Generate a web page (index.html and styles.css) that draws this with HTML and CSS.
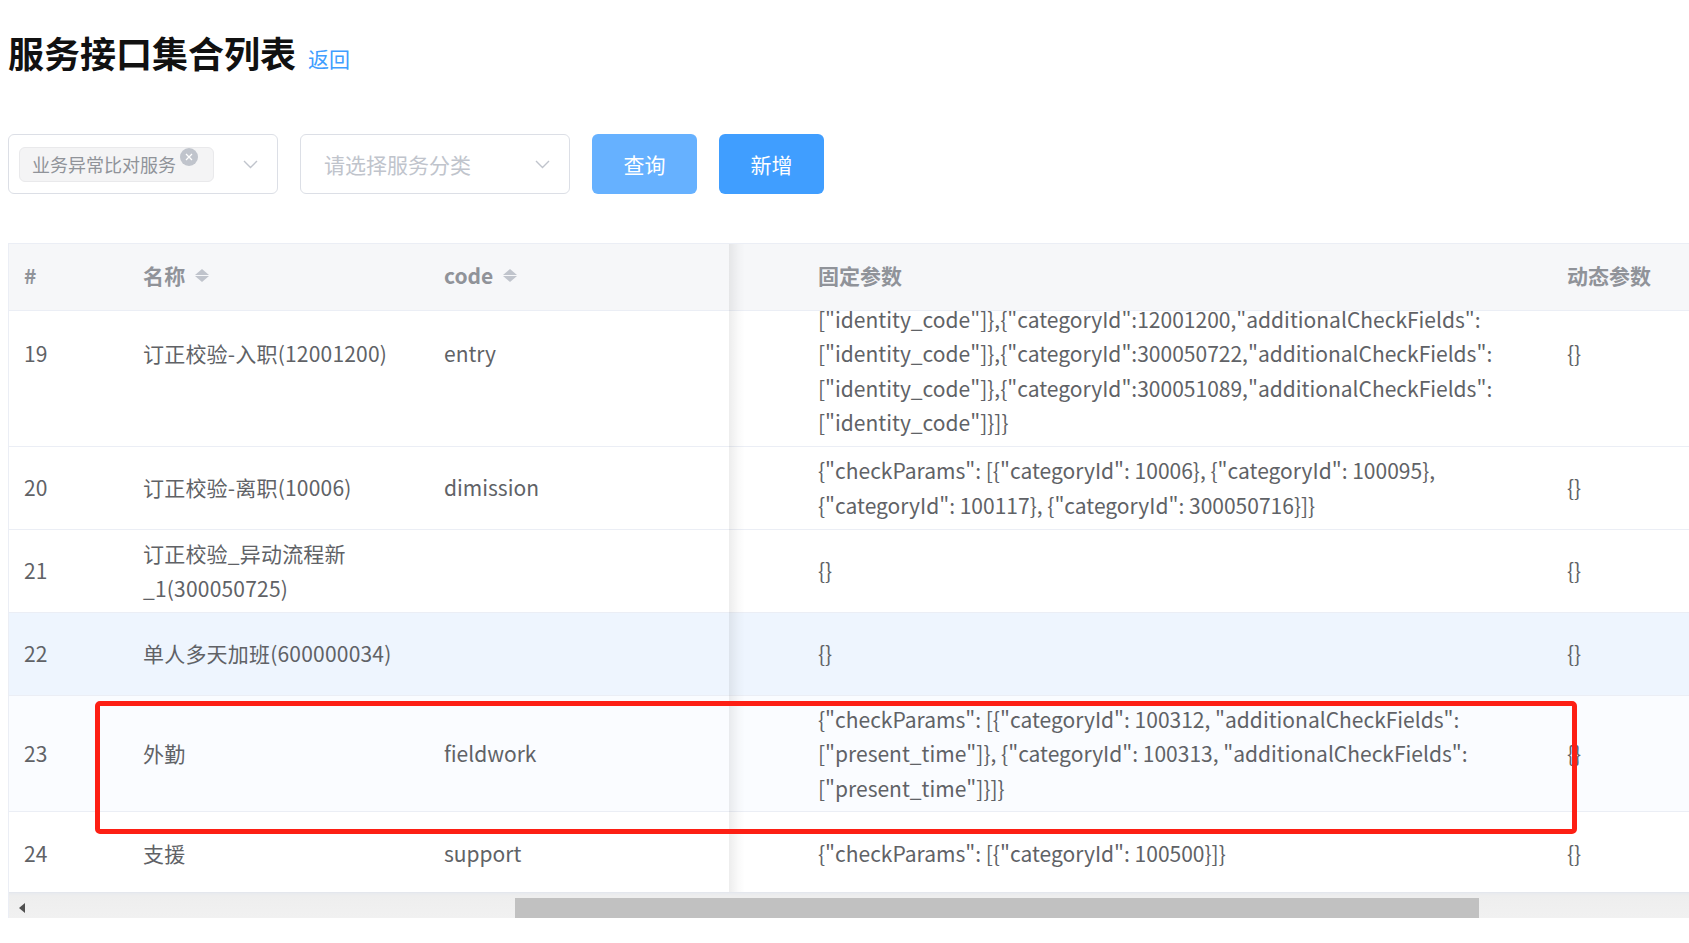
FILE: index.html
```html
<!DOCTYPE html>
<html lang="zh-CN">
<head>
<meta charset="utf-8">
<title>服务接口集合列表</title>
<link rel="stylesheet" href="styles.css">
</head>
<body>
<div class="page">
  <div class="title-bar">
    <h2 class="title">服务接口集合列表</h2>
    <a class="back">返回</a>
  </div>

  <div class="filters">
    <div class="select">
      <span class="tag">业务异常比对服务<span class="tag-close"><svg width="10" height="10" viewBox="0 0 10 10"><path d="M2 2 L8 8 M8 2 L2 8" stroke="#fff" stroke-width="1.3" fill="none"/></svg></span></span>
      <span class="spacer"></span>
      <svg class="chev" width="15" height="9" viewBox="0 0 15 9"><path d="M1 1 L7.5 7.5 L14 1" stroke="#c0c4cc" stroke-width="1.4" fill="none"/></svg>
    </div>
    <div class="select">
      <span class="placeholder">请选择服务分类</span>
      <span class="spacer"></span>
      <svg class="chev" width="15" height="9" viewBox="0 0 15 9"><path d="M1 1 L7.5 7.5 L14 1" stroke="#c0c4cc" stroke-width="1.4" fill="none"/></svg>
    </div>
    <button class="btn btn-light">查询</button>
    <button class="btn btn-primary">新增</button>
  </div>

  <div class="table">
    <div class="row thead">
      <div class="cell c-idx">#</div>
      <div class="cell c-name">名称<span class="caret"><i class="up"></i><i class="down"></i></span></div>
      <div class="cell c-code">code<span class="caret"><i class="up"></i><i class="down"></i></span></div>
      <div class="cell c-fixed">固定参数</div>
      <div class="cell c-dyn">动态参数</div>
    </div>
    <div class="tbody">
      <div class="tbody-inner">
        <div class="row">
          <div class="cell c-idx">19</div>
          <div class="cell c-name">订正校验-入职(12001200)</div>
          <div class="cell c-code">entry</div>
          <div class="cell c-fixed">{"checkParams":[{"categoryId":10001,"additionalCheckFields":<br>["identity_code"]},{"categoryId":12001200,"additionalCheckFields":<br>["identity_code"]},{"categoryId":300050722,"additionalCheckFields":<br>["identity_code"]},{"categoryId":300051089,"additionalCheckFields":<br>["identity_code"]}]}</div>
          <div class="cell c-dyn">{}</div>
        </div>
        <div class="row">
          <div class="cell c-idx">20</div>
          <div class="cell c-name">订正校验-离职(10006)</div>
          <div class="cell c-code">dimission</div>
          <div class="cell c-fixed">{"checkParams": [{"categoryId": 10006}, {"categoryId": 100095},<br>{"categoryId": 100117}, {"categoryId": 300050716}]}</div>
          <div class="cell c-dyn">{}</div>
        </div>
        <div class="row">
          <div class="cell c-idx">21</div>
          <div class="cell c-name">订正校验_异动流程新<br>_1(300050725)</div>
          <div class="cell c-code"></div>
          <div class="cell c-fixed">{}</div>
          <div class="cell c-dyn">{}</div>
        </div>
        <div class="row row-hover">
          <div class="cell c-idx">22</div>
          <div class="cell c-name">单人多天加班(600000034)</div>
          <div class="cell c-code"></div>
          <div class="cell c-fixed">{}</div>
          <div class="cell c-dyn">{}</div>
        </div>
        <div class="row row-striped">
          <div class="cell c-idx">23</div>
          <div class="cell c-name">外勤</div>
          <div class="cell c-code">fieldwork</div>
          <div class="cell c-fixed">{"checkParams": [{"categoryId": 100312, "additionalCheckFields":<br>["present_time"]}, {"categoryId": 100313, "additionalCheckFields":<br>["present_time"]}]}</div>
          <div class="cell c-dyn">{}</div>
        </div>
        <div class="row">
          <div class="cell c-idx">24</div>
          <div class="cell c-name">支援</div>
          <div class="cell c-code">support</div>
          <div class="cell c-fixed">{"checkParams": [{"categoryId": 100500}]}</div>
          <div class="cell c-dyn">{}</div>
        </div>
      </div>
    </div>
    <div class="hscroll">
      <span class="hs-arrow"></span>
      <span class="hs-thumb"></span>
    </div>
    <div class="fixed-shadow"></div>
    <div class="annot"></div>
  </div>
</div>
</body>
</html>
```

FILE: styles.css
```css
html, body {
  margin: 0;
  padding: 0;
  background: #fff;
}
body {
  font-family: "Noto Sans CJK SC", "Microsoft YaHei", sans-serif;
  color: #606266;
  overflow: hidden;
}
.page {
  padding-left: 8px;
}

/* title */
.title-bar {
  margin-top: 25px;
  height: 54px;
  display: flex;
  align-items: baseline;
}
.title {
  margin: 0;
  font-size: 36px;
  line-height: 54px;
  font-weight: 700;
  color: #111;
}
.back {
  margin-left: 12px;
  font-size: 21px;
  color: #409eff;
  cursor: pointer;
  position: relative;
  top: -1px;
}

/* filters */
.filters {
  margin-top: 55px;
  display: flex;
  gap: 22px;
}
.select {
  width: 270px;
  height: 60px;
  box-sizing: border-box;
  border: 1px solid #dcdfe6;
  border-radius: 6px;
  display: flex;
  align-items: center;
  padding: 0 19px 0 10px;
}
.spacer { flex: 1; }
.placeholder {
  padding-left: 13px;
  font-size: 21px;
  color: #c0c4cc;
}
.tag {
  height: 35px;
  box-sizing: border-box;
  display: inline-flex;
  align-items: center;
  padding: 0 15px 0 12px;
  background: #f4f4f5;
  border: 1px solid #e9e9eb;
  border-radius: 6px;
  font-size: 18px;
  color: #909399;
  white-space: nowrap;
}
.tag-close {
  width: 18px;
  height: 18px;
  border-radius: 50%;
  background: #c0c4cc;
  margin-left: 4px;
  display: inline-flex;
  align-items: center;
  justify-content: center;
  position: relative;
  top: -7px;
}
.chev { display: block; }

.btn {
  width: 105px;
  height: 60px;
  border: none;
  border-radius: 6px;
  color: #fff;
  font-family: inherit;
  font-size: 21px;
  padding: 0;
}
.btn-light { background: #66b1ff; }
.btn-primary { background: #409eff; }

/* table */
.table {
  margin-top: 49px;
  position: relative;
  border-top: 1px solid #ebeef5;
  border-left: 1px solid #ebeef5;
  overflow: hidden;
  font-size: 21px;
}
.row {
  display: flex;
  align-items: center;
  min-height: 83px;
  box-sizing: border-box;
  border-bottom: 1px solid #ebeef5;
  background: #fff;
}
.cell {
  box-sizing: border-box;
  flex: none;
  padding: 6px 16px;
  line-height: 34.5px;
  white-space: nowrap;
}
.c-idx { width: 118px; padding-left: 15px; }
.c-name { width: 301px; letter-spacing: 0.2px; }
.c-code { width: 301px; }
.c-fixed { width: 822px; padding-left: 89px; }
.c-dyn { flex: 1; }

.thead {
  min-height: 67px;
  height: 67px;
  background: #f6f7f9;
  color: #909399;
  font-weight: 700;
}
.thead .cell {
  display: flex;
  align-items: center;
  padding-bottom: 9px;
}
.caret {
  display: inline-flex;
  flex-direction: column;
  gap: 1px;
  margin-left: 10px;
}
.caret i {
  display: block;
  width: 0;
  height: 0;
  border-left: 7px solid transparent;
  border-right: 7px solid transparent;
}
.caret .up { border-bottom: 6px solid #c0c4cc; }
.caret .down { border-top: 6px solid #c0c4cc; }

.tbody {
  height: 581px;
  overflow: hidden;
}
.tbody-inner {
  margin-top: -50px;
}
.row-hover { background: #eef5fe; }
.row-striped { background: #fafcff; }

.hscroll {
  height: 26px;
  border-top: 1px solid #e4e7ed;
  box-sizing: border-box;
  background: linear-gradient(#e8eaee, #eeeeee 3px, #f1f1f1);
  display: flex;
  align-items: center;
}
.hs-arrow {
  width: 0;
  height: 0;
  margin-left: 10px;
  border-right: 6px solid #505050;
  border-top: 5px solid transparent;
  border-bottom: 5px solid transparent;
  margin-top: 4px;
}
.hs-thumb {
  margin-left: 490px;
  width: 964px;
  height: 20px;
  margin-top: 4px;
  background: #c1c1c1;
}

.fixed-shadow {
  position: absolute;
  left: 720px;
  top: 0;
  width: 16px;
  height: 648px;
  background: linear-gradient(to right, rgba(0,0,0,0.07), rgba(0,0,0,0.02) 60%, rgba(0,0,0,0));
  pointer-events: none;
}
.annot {
  position: absolute;
  left: 86px;
  top: 457px;
  width: 1482px;
  height: 133px;
  box-sizing: border-box;
  border: 5px solid #fd1f14;
  border-radius: 5px;
  pointer-events: none;
}
```
